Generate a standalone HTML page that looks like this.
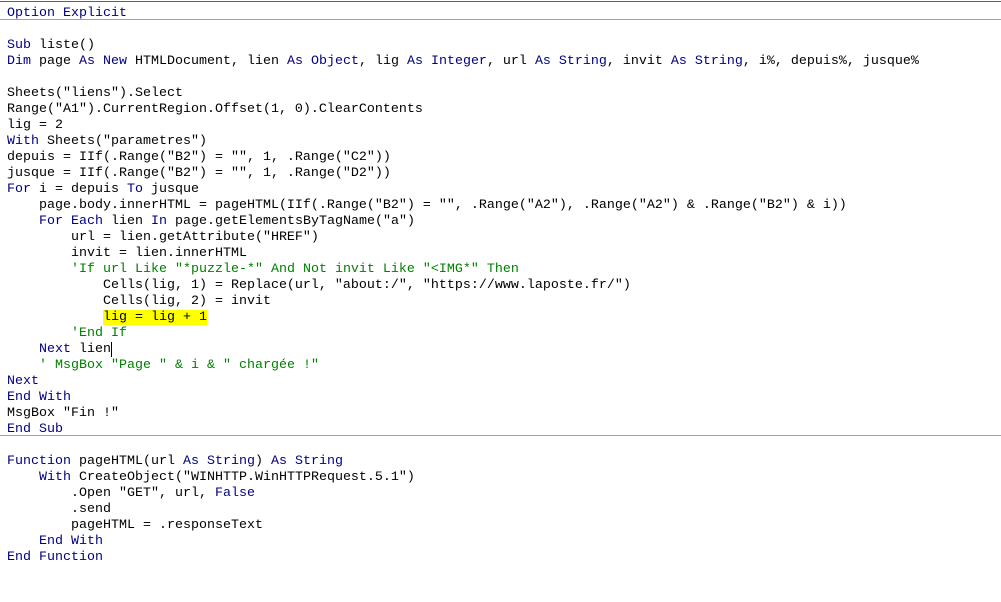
<!DOCTYPE html><html><head><style>
body{margin:0;background:#fff;width:1001px;height:602px;overflow:hidden;position:relative}
pre{margin:0;position:absolute;left:7px;top:6px;font-family:"Liberation Mono",monospace;font-size:13.33px;line-height:16px;color:#000}
.k{color:#000080}.c{color:#008000}.h{background:#ffff00}
.sep{position:absolute;left:0;width:1001px;height:1px;background:#808080}
</style></head><body>
<div class="sep" style="top:1px;background:#606060"></div>
<div class="sep" style="top:19px;background:#a0a0a0"></div>
<div class="sep" style="top:435px;background:#a0a0a0"></div>
<pre><span class="k">Option Explicit</span>

<span class="k">Sub</span> liste()
<span class="k">Dim</span> page <span class="k">As New</span> HTMLDocument, lien <span class="k">As Object</span>, lig <span class="k">As Integer</span>, url <span class="k">As String</span>, invit <span class="k">As String</span>, i%, depuis%, jusque%

Sheets("liens").Select
Range("A1").CurrentRegion.Offset(1, 0).ClearContents
lig = 2
<span class="k">With</span> Sheets("parametres")
depuis = IIf(.Range("B2") = "", 1, .Range("C2"))
jusque = IIf(.Range("B2") = "", 1, .Range("D2"))
<span class="k">For</span> i = depuis <span class="k">To</span> jusque
    page.body.innerHTML = pageHTML(IIf(.Range("B2") = "", .Range("A2"), .Range("A2") &amp; .Range("B2") &amp; i))
    <span class="k">For Each</span> lien <span class="k">In</span> page.getElementsByTagName("a")
        url = lien.getAttribute("HREF")
        invit = lien.innerHTML
        <span class="c">'If url Like "*puzzle-*" And Not invit Like "&lt;IMG*" Then</span>
            Cells(lig, 1) = Replace(url, "about:/", "https://www.laposte.fr/")
            Cells(lig, 2) = invit
            <span class="h">lig = lig + 1</span>
        <span class="c">'End If</span>
    <span class="k">Next</span> lien<span style="border-left:1px solid #000;margin-left:0"></span>
    <span class="c">' MsgBox "Page " &amp; i &amp; " chargée !"</span>
<span class="k">Next</span>
<span class="k">End With</span>
MsgBox "Fin !"
<span class="k">End Sub</span>

<span class="k">Function</span> pageHTML(url <span class="k">As String</span>) <span class="k">As String</span>
    <span class="k">With</span> CreateObject("WINHTTP.WinHTTPRequest.5.1")
        .Open "GET", url, <span class="k">False</span>
        .send
        pageHTML = .responseText
    <span class="k">End With</span>
<span class="k">End Function</span>
</pre>
</body></html>
